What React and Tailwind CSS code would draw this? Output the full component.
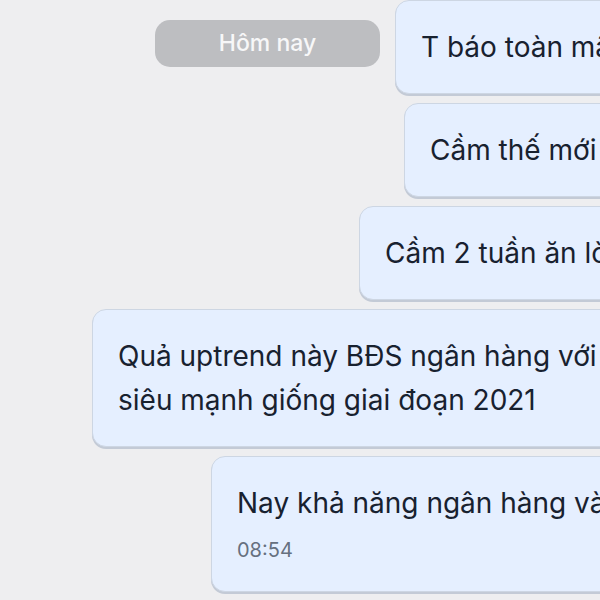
import React from "react";

const font = { fontFamily: "Inter, 'Noto Sans', sans-serif" };

function Bubble({ offset, children, time }) {
  return (
    <div className={`flex ${offset}`}>
      <div className="shrink-0 whitespace-nowrap rounded-[14px] border border-[#cdd6e3] bg-[#e5efff] pl-[25px] pr-[40px] py-[24px] shadow-[0_2px_0_#c3cad6] text-[#18212f] text-[28px] leading-[44px]">
        {children}
        {time && <div className="mt-[11px] mb-[3px] text-[20px] leading-[28px] text-[#667080]">{time}</div>}
      </div>
    </div>
  );
}

export default function App() {
  return (
    <div style={font} className="relative h-[600px] w-[600px] overflow-hidden bg-[#eeeef0]">
      <div className="flex flex-col gap-[9px]">
        <Bubble offset="ml-[395px]">T báo toàn mã cổ phiếu rồi mà</Bubble>
        <Bubble offset="ml-[404px]">Cầm thế mới lãi được</Bubble>
        <Bubble offset="ml-[359px]">Cầm 2 tuần ăn lời luôn</Bubble>
        <Bubble offset="ml-[92px]">
          <div>Quả uptrend này BĐS ngân hàng với chứng khoán</div>
          <div>siêu mạnh giống giai đoạn 2021</div>
        </Bubble>
        <Bubble offset="ml-[211px]" time="08:54">Nay khả năng ngân hàng vào sóng</Bubble>
      </div>
      <div className="absolute left-[155px] top-[20px] flex h-[47px] w-[225px] items-center justify-center rounded-[15px] bg-[#bdbec1] text-[23px] font-medium text-[#f7f7f8]">
        Hôm nay
      </div>
    </div>
  );
}
